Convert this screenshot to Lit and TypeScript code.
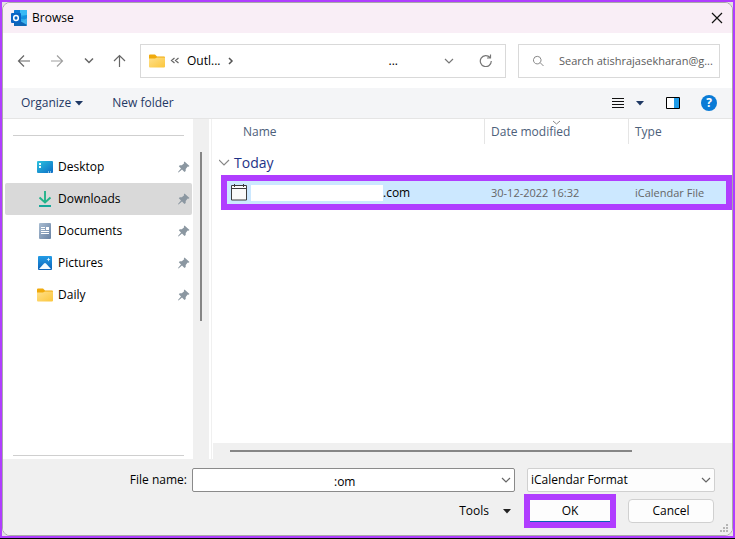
import { LitElement, html, css, svg } from "lit";
import { customElement, state } from "lit/decorators.js";

const folder = html`<svg width="17" height="16" viewBox="0 0 17 16">
  <defs><linearGradient id="fg" x1="0" y1="0" x2="1" y2="1"><stop offset="0" stop-color="#ffe08a" /><stop offset="1" stop-color="#fbc63c" /></linearGradient></defs>
  <path d="M0 2.500a1 1 0 0 1 1-1h5l2 2h7a1 1 0 0 1 1 1V9H0z" fill="#f0aa0c" />
  <path d="M0 5.500h6l2-1h8v9a1 1 0 0 1-1 1H1a1 1 0 0 1-1-1z" fill="url(#fg)" />
</svg>`;

const desktop = html`<svg width="17" height="16" viewBox="0 0 17 16">
  <defs><linearGradient id="dg" x1="0" y1="0" x2="1" y2="1"><stop offset="0" stop-color="#2cc3de" /><stop offset="1" stop-color="#0b6cc6" /></linearGradient></defs>
  <rect y="2" width="16" height="12" rx="1" fill="url(#dg)" />
  <path d="M2 4h2v2H2zM2 7h2v2H2zM11 12.500h1v1h-1zM13 12.500h1v1h-1z" fill="#e8fbff" />
</svg>`;

const download = html`<svg width="17" height="16" viewBox="0 0 17 16">
  <path d="M8 0v11M2.500 6.500L8 11.500 13.500 6.500" fill="none" stroke="#22b38a" stroke-width="1.900" />
  <path d="M2 15h12" stroke="#16a89a" stroke-width="2" />
</svg>`;

const documentIcon = html`<svg width="17" height="16" viewBox="0 0 17 16">
  <defs><linearGradient id="og" x1="0" y1="0" x2="1" y2="1"><stop offset="0" stop-color="#a9bdd2" /><stop offset="1" stop-color="#6781a3" /></linearGradient></defs>
  <rect x="2" width="12" height="16" rx="1" fill="url(#og)" />
  <path d="M4 4.500h4M4 6.500h4M4 8.500h8M4 10.500h8M9 4.500h3M9 5.500h3M9 6.500h3" stroke="#fff" />
</svg>`;

const picture = html`<svg width="17" height="16" viewBox="0 0 17 16">
  <defs><linearGradient id="pg" x1="0" y1="0" x2="0" y2="1"><stop offset="0" stop-color="#239ce6" /><stop offset="1" stop-color="#0c62b8" /></linearGradient></defs>
  <rect x="1" y="1" width="14" height="14" rx="1" fill="url(#pg)" />
  <path d="M2 14l5-5.500q1-1 2 0L14 14z" fill="#f4faff" />
  <path d="M11.500 2.500l.6 1.400 1.400.6-1.400.6-.6 1.400-.6-1.400-1.400-.6 1.400-.6z" fill="#e5f5ff" />
</svg>`;

const pin = html`<svg width="12" height="12" viewBox="0 0 12 12">
  <path d="M6.500.5l5 4.500-1 .7-.8-.1-2 2.300V10l-1.200 1L4 8.600.5 11.500 0 11 3 7.600.8 5.300l1-1.100h2l2.400-2-.4-.8z" fill="#8b97a1" />
</svg>`;

const outlook = html`<svg width="16" height="16" viewBox="0 0 16 16">
  <rect x="3" width="13" height="13" rx="1" fill="#28a8ea" />
  <path d="M3 1a1 1 0 0 1 1-1h5v5H3z" fill="#0f78d4" />
  <path d="M9 0h6a1 1 0 0 1 1 1v4H9z" fill="#39b9f5" />
  <path d="M9 9h7V5l-7 2z" fill="#1490df" />
  <path d="M3 16h12a1 1 0 0 0 1-1V8l-6 4-7-3z" fill="#1066b5" />
  <path d="M16 8v7l-6-3.500z" fill="#41b2ec" />
  <rect y="3" width="10" height="10" rx="1" fill="#0a64c4" />
  <ellipse cx="5" cy="8" rx="2.300" ry="2.500" fill="none" stroke="#fff" stroke-width="1.500" />
</svg>`;

const calendar = html`<svg width="16" height="17" viewBox="0 0 16 17">
  <path d="M.5 1.500h15v14.500H.5z" fill="#fafafa" stroke="#3c3c3c" />
  <path d="M0 4.500h16M3.500 0v3M12.500 0v3" stroke="#3c3c3c" />
</svg>`;

const stroke = (d: string, w: number, h: number, color = "#666", sw = 1.2) =>
  html`<svg width=${w} height=${h} viewBox="0 0 ${w} ${h}" fill="none" stroke=${color} stroke-width=${sw}>${svg`<path d=${d} />`}</svg>`;

const triangle = (color: string) =>
  html`<svg width="8" height="5" viewBox="0 0 8 5"><path d="M0 0h8L4 4.500z" fill=${color} /></svg>`;

@customElement("app-root")
export class AppRoot extends LitElement {
  @state() private selected = "Downloads";

  private places = [
    { name: "Desktop", icon: desktop },
    { name: "Downloads", icon: download },
    { name: "Documents", icon: documentIcon },
    { name: "Pictures", icon: picture },
    { name: "Daily", icon: folder },
  ];

  static styles = css`
    :host {
      display: flex;
      box-sizing: border-box;
      min-height: 100vh;
      border-bottom: 1px solid #000;
      font: 12px/16px "Open Sans", "Noto Sans", sans-serif;
      color: #000;
    }
    * { box-sizing: border-box; }
    svg { display: block; flex: none; }
    button, input, select { font: inherit; color: inherit; margin: 0; }
    button { background: none; border: 0; padding: 0; display: flex; align-items: center; }
    .frame { flex: 1; min-width: 0; display: flex; border: 2px solid #b03dff; background: #e3e3e3; }
    .window {
      flex: 1; min-width: 0; display: flex; flex-direction: column;
      border: 1px solid #a9a9a9; border-radius: 8px; overflow: hidden; background: #fff;
    }
    .title { display: flex; align-items: center; gap: 5px; height: 30px; padding: 0 9px 0 8px; background: #f9eef6; }
    .title h1 { flex: 1; margin: 0; font: inherit; }
    .nav { display: flex; align-items: center; gap: 12px; height: 55px; padding: 0 12px 0 14px; }
    .arrows { display: flex; align-items: center; width: 111px; padding-right: 2px; justify-content: space-between; }
    .address { flex: 1; min-width: 0; display: flex; align-items: center; height: 34px; padding: 0 13px 0 8px; border: 1px solid #d9d9d9; }
    .crumbs { flex: 1; display: flex; align-items: center; gap: 8px; }
    .back { margin-left: -4px; }
    .more { margin-right: 46px; }
    .expand { margin-right: 25px; }
    .search { display: flex; align-items: center; gap: 14px; width: 202px; height: 34px; padding: 0 0 0 14px; border: 1px solid #d9d9d9; font-size: 11px; }
    .search input { flex: 1; min-width: 0; border: 0; padding: 0; background: none; outline: 0; }
    .search input::placeholder { color: #5c5c5c; opacity: 1; }
    .tools { display: flex; align-items: center; height: 31px; padding: 0 15px 0 18px; background: #f4f5f7; border-bottom: 1px solid #e5e5e5; color: #1f3864; }
    .organize { gap: 4px; margin-right: 29px; }
    .fill { flex: 1; }
    .view { gap: 12px; margin-right: 22px; }
    .pane { margin-right: 21px; }
    .help { width: 16px; height: 16px; border-radius: 50%; justify-content: center; background: #0a7bd6; color: #fff; font-weight: 700; }
    .main { flex: 1; display: flex; }
    .side { width: 190px; display: flex; flex-direction: column; padding: 16px 0 3px 2px; }
    .side hr { width: 171px; margin: 0 8px; border: 0; height: 1px; background: #cfcfcf; }
    .side ul { flex: 1; list-style: none; margin: 0; padding: 15px 0 0; }
    .place { width: 187px; height: 32px; padding: 0 2px 0 32px; gap: 4px; border-radius: 2px; text-align: left; }
    .place.on { background: #d9d9d9; }
    .place span { flex: 1; }
    .vtrack { width: 16px; padding: 33px 7px 0; background: #f0f0f0; }
    .vthumb { width: 2px; height: 169px; background: #868686; }
    .split { width: 3px; border-right: 1px solid #f0f0f0; }
    .list { flex: 1; min-width: 0; display: flex; flex-direction: column; }
    .rows { flex: 1; padding-left: 7px; }
    table { width: 100%; table-layout: fixed; border-collapse: separate; border-spacing: 0; }
    th, td { padding: 0 0 0 6px; text-align: left; font-weight: 400; white-space: nowrap; }
    .cg { width: 2px; }
    .cd { width: 144px; }
    .ct { width: 104px; }
    thead th { position: relative; height: 25px; color: #4c607a; border-left: 1px solid #e5e5e5; }
    thead th:first-child { border-left: 0; padding-left: 24px; }
    .sort { position: absolute; top: 1px; left: 67px; }
    .group { height: 31px; padding: 6px 0 0; color: #1e3287; font-size: 14px; line-height: 20px; }
    .group div { display: flex; align-items: center; gap: 4px; }
    .file td { height: 35px; border: solid #b03dff; border-width: 6px 0; padding-left: 7px; background: #cce8ff; color: #666; font-size: 11px; }
    .file .gap { border: 0; padding: 0; background: none; }
    .file .first { border-left-width: 6px; padding-left: 4px; color: #000; font-size: 12px; }
    .file td:last-child { border-right-width: 6px; }
    .name { display: flex; align-items: center; }
    .blank { width: 132px; height: 16px; margin-left: 4px; background: #fff; }
    .htrack { height: 16px; margin-left: 1px; padding: 7px 100px 0 17px; background: #f0f0f0; }
    .hthumb { height: 2px; background: #868686; }
    .foot { position: relative; display: flex; flex-direction: column; gap: 2px; padding: 9px 17px 7px 3px; background: #f0f0f0; }
    .line { display: flex; align-items: center; }
    .line label { flex: none; width: 186px; padding-right: 5px; text-align: right; }
    .box { position: relative; display: flex; }
    .box svg { position: absolute; right: 4px; top: 9px; pointer-events: none; }
    .fname { flex: 1; margin-right: 12px; }
    .fname input { width: 100%; height: 24px; padding: 2px 20px 0 141px; border: 1px solid #8a8a8a; border-radius: 2px; background: #fff; }
    .format { width: 188px; }
    .format select { width: 100%; height: 24px; padding: 0 3px; border: 1px solid #d0d0d0; border-radius: 2px; background: #fdfdfd; appearance: none; }
    .acts { justify-content: flex-end; padding-right: 1px; }
    .menu { gap: 14px; margin-right: 13px; }
    .ok, .cancel { justify-content: center; background: #fdfdfd; }
    .ok { width: 92px; height: 34px; margin-right: 12px; border: 6px solid #b03dff; box-shadow: inset 0 -1px #0a62b5; }
    .cancel { width: 86px; height: 24px; border: 1px solid #d0d0d0; border-radius: 4px; }
    .grip { position: absolute; right: 4px; bottom: 3px; }
  `;

  render() {
    return html`<div class="frame"><main class="window">
      <header class="title">${outlook}<h1>Browse</h1>
        <button aria-label="Close">${stroke("M1 1l10 10M11 1L1 11", 12, 12, "#111", 1.2)}</button>
      </header>
      <nav class="nav">
        <div class="arrows">
          <button aria-label="Back">${stroke("M13 7H1.500M7 1.500L1.500 7 7 12.500", 14, 14)}</button>
          <button aria-label="Forward">${stroke("M1 7h11.500M7 1.500L12.500 7 7 12.500", 14, 14, "#a0a0a0")}</button>
          <button aria-label="Recent">${stroke("M1 1.500L5 5.500 9 1.500", 10, 7, "#666", 1.5)}</button>
          <button aria-label="Up">${stroke("M6.500 13V1.500M1 7l5.500-5.500L12 7", 13, 14)}</button>
        </div>
        <div class="address">
          <div class="crumbs">${folder}
            <span class="back">${stroke("M4.500 1L1.500 3.500 4.500 6M8.500 1L5.500 3.500 8.500 6", 9, 7)}</span>
            <span>Outl...</span>${stroke("M1 1l3 3-3 3", 6, 8, "#555", 1.5)}
          </div>
          <span class="more">...</span>
          <button class="expand" aria-label="Show locations">${stroke("M1 1l4 4 4-4", 10, 6, "#777")}</button>
          <button aria-label="Refresh">${stroke("M11 3.500A5.500 5.500 0 1 0 12.300 7M11.500.5v3.500H8", 13, 13, "#777")}</button>
        </div>
        <label class="search">${stroke("M8 4.500A3.800 3.800 0 1 1 .5 4.500 3.800 3.800 0 0 1 8 4.500M7 7.500L10.500 11", 12, 12, "#888", 1)}
          <input aria-label="Search" placeholder="Search atishrajasekharan@g..." />
        </label>
      </nav>
      <div class="tools">
        <button class="organize">Organize ${triangle("#1f3864")}</button>
        <button>New folder</button>
        <span class="fill"></span>
        <button class="view" aria-label="Change view">${stroke("M0 1.500h12M0 4.500h12M0 7.500h12M0 10.500h12", 12, 12, "#111", 1)}${triangle("#1f3864")}</button>
        <button class="pane" aria-label="Preview pane"><svg width="14" height="12" viewBox="0 0 14 12"><path d="M.5.5h13v11H.5z" fill="#fff" stroke="#000" /><path d="M8 1h5v10H8z" fill="#1f9be8" /></svg></button>
        <button class="help" aria-label="Help">?</button>
      </div>
      <div class="main">
        <aside class="side"><hr />
          <ul>${this.places.map((p) => html`<li>
            <button class="place ${p.name === this.selected ? "on" : ""}" @click=${() => (this.selected = p.name)}>
              ${p.icon}<span>${p.name}</span>${pin}
            </button></li>`)}</ul>
          <hr />
        </aside>
        <div class="vtrack"><div class="vthumb"></div></div>
        <div class="split"></div>
        <section class="list">
          <div class="rows"><table>
            <colgroup><col class="cg" /><col /><col class="cd" /><col class="ct" /></colgroup>
            <thead><tr><th colspan="2">Name</th>
              <th>Date modified<span class="sort">${stroke("M1 1l3.500 3L8 1", 9, 5, "#888", 1)}</span></th>
              <th>Type</th></tr></thead>
            <tbody>
              <tr><td class="group" colspan="4"><div>${stroke("M0 1l5 5 5-5", 11, 8, "#888")}Today</div></td></tr>
              <tr class="file"><td class="gap"></td><td class="first"><div class="name">${calendar}<span class="blank"></span>.com</div></td>
                <td>30-12-2022 16:32</td><td>iCalendar File</td></tr>
            </tbody>
          </table></div>
          <div class="htrack"><div class="hthumb"></div></div>
        </section>
      </div>
      <footer class="foot">
        <div class="line">
          <label for="fname">File name:</label>
          <div class="box fname"><input id="fname" .value=${":om"} />${stroke("M1 1l4 4 4-4", 10, 7)}</div>
          <div class="box format"><select aria-label="File type"><option>iCalendar Format</option></select>${stroke("M1 1l4 4 4-4", 10, 7)}</div>
        </div>
        <div class="line acts">
          <button class="menu">Tools ${triangle("#222")}</button>
          <button class="ok">OK</button>
          <button class="cancel">Cancel</button>
        </div>
        <svg class="grip" width="8" height="8" viewBox="0 0 8 8"><path d="M6 0h2v2H6zM3 3h2v2H3zM6 3h2v2H6zM0 6h2v2H0zM3 6h2v2H3zM6 6h2v2H6z" fill="#b5b5b5" /></svg>
      </footer>
    </main></div>`;
  }
}
